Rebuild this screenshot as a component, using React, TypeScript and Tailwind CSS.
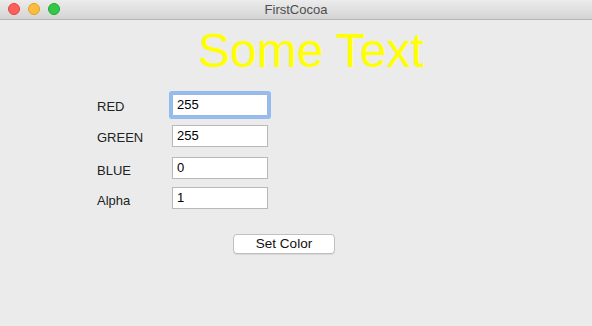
import React from "react";

function Row({ label, value, focused, mt, lp }: { label: string; value: string; focused?: boolean; mt: string; lp: string }) {
  return (
    <div className={`flex items-center ${mt}`}>
      <div className={`w-[76px] pl-[1px] ${lp} text-[13px] text-[#222] leading-[16px]`}>{label}</div>
      <div
        className={
          focused
            ? "w-[96px] h-[22px] bg-white border border-[#9db8e0] rounded-[1px] shadow-[0_0_0_3px_#94bcef] flex items-center pl-[4px] text-[13px] text-black"
            : "w-[96px] h-[22px] bg-white border border-[#b8b8b8] flex items-center pl-[4px] text-[13px] text-black"
        }
      >
        {value}
      </div>
    </div>
  );
}

export default function App() {
  return (
    <div className="w-[592px] h-[326px] bg-[#ebebeb] flex flex-col font-['Liberation_Sans',Arial,sans-serif] overflow-hidden">
      <div className="relative h-[20px] shrink-0 border-b border-[#b4b4b4] bg-gradient-to-b from-[#ececec] to-[#d4d4d4] flex items-center justify-center">
        <div className="absolute left-[8px] top-[3px] flex gap-[8px]">
          <div className="w-[12px] h-[12px] rounded-full bg-[#fc605c] border border-[#e0443e]" />
          <div className="w-[12px] h-[12px] rounded-full bg-[#fdbc40] border border-[#dea123]" />
          <div className="w-[12px] h-[12px] rounded-full bg-[#34c84a] border border-[#1aab29]" />
        </div>
        <span className="text-[13px] text-[#4d4d4d] leading-none">FirstCocoa</span>
      </div>
      <div className="flex pl-[198px] mt-[7px]">
        <span className="text-[48px] leading-[48px] text-[#ffff00]">Some Text</span>
      </div>
      <div className="pl-[96px] flex flex-col">
        <Row label="RED" value="255" focused mt="mt-[19px]" lp="pt-[3px]" />
        <Row label="GREEN" value="255" mt="mt-[9px]" lp="pt-[4px]" />
        <Row label="BLUE" value="0" mt="mt-[10px]" lp="pt-[6px]" />
        <Row label="Alpha" value="1" mt="mt-[8px]" lp="pt-[6px]" />
      </div>
      <div className="flex pl-[233px] mt-[25px]">
        <button className="w-[102px] h-[20px] bg-white border border-[#c0c0c0] rounded-[4px] shadow-[0_1px_0_rgba(0,0,0,0.08)] text-[13.5px] text-[#111] leading-none flex items-center justify-center">
          Set Color
        </button>
      </div>
    </div>
  );
}
